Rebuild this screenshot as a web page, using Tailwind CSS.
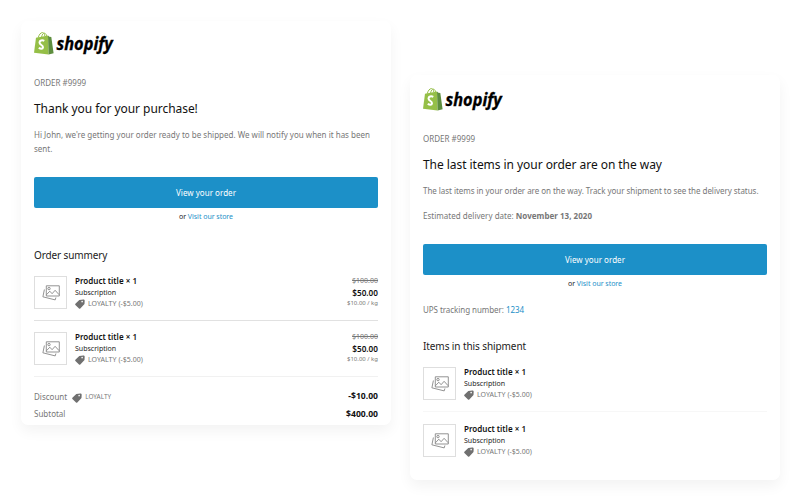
<!DOCTYPE html>
<html lang="en">
<head>
<meta charset="utf-8">
<title>Order emails</title>
<script src="https://cdn.jsdelivr.net/npm/@tailwindcss/browser@4"></script>
</head>
<body class="h-[500px] w-[800px] overflow-hidden bg-white font-['Noto_Sans',sans-serif] text-[8px] text-[#777]">
<svg class="hidden">
  <symbol id="logo" viewBox="0 0 80 24">
    <path d="M4.200 6.800C5 3.600 6.700 1.500 8.500 1.600c1.300 0 2 1.200 2.300 3.400M7.600 6.100C8 3.600 9.200 1.800 10.600 2.200c1.200.3 1.900 1.600 2 3" fill="none" stroke="#95bf47" stroke-width="1"/>
    <path d="M2 6.800 14 4.400l.6 19.200L0 21.700z" fill="#95bf47"/>
    <path d="m14 4.400 1.400 1.300 1.900.3 2.300 16.300-5 1.300z" fill="#5e8e3e"/>
    <path d="M10.300 9.800C8.100 8.700 5.500 9.400 5.500 11.500c0 2.400 3.700 2.700 3.500 4.900-.2 1.900-2.600 1.600-4.200.3" fill="none" stroke="#fff" stroke-width="2"/>
    <text x="22.500" y="18.900" font-family="Open Sans" font-style="italic" font-weight="700" font-size="17.500" textLength="56.300" lengthAdjust="spacingAndGlyphs" fill="#000" stroke="#000" stroke-width=".3">shopify</text>
  </symbol>
  <symbol id="photo" viewBox="0 0 18 16">
    <g fill="none" stroke="#808080" stroke-width=".85">
      <path d="M4.300.8h13v10.200h-13zM4.500 9.700l3.300-3.500 2.300 2.500 3-3.400 4 4.400"/>
      <circle cx="7" cy="3.600" r="1.200"/>
      <path d="M2.400 4.500.900 11.800l12.300 3.100.7-2.400"/>
    </g>
  </symbol>
  <symbol id="tag" viewBox="0 0 10 10">
    <path fill-rule="evenodd" d="M4.300.9 8.300.4c.9 0 1.300.4 1.400 1.200L9.500 4.900 5.300 9.500c-.4.400-.9.400-1.300 0L.4 6c-.4-.4-.4-.9 0-1.300zM7.100 1.800a.8.800 0 1 0 .1 1.600.8.800 0 0 0-.1-1.600z" fill="#707070"/>
  </symbol>
</svg>
<main class="flex items-start gap-[19px] pl-[21px] pt-[21px]">
  <section class="h-[404px] w-[370px] rounded-[7px] bg-white px-[13px] pt-[10px] shadow-[0_6px_14px_rgba(0,0,0,0.05)]">
    <svg class="h-[24px] w-[80px]"><use href="#logo"/></svg>
    <p class="mt-[22px] h-3 leading-3">ORDER #9999</p>
    <h1 class="mt-[11px] h-[18px] text-[12px] leading-[18px] tracking-[-0.05px] text-[#111]">Thank you for your purchase!</h1>
    <p class="mt-[10px] h-[28px] leading-[14px] tracking-[0.006px]">Hi John, we're getting your order ready to be shipped. We will notify you when it has been<br>sent.</p>
    <a class="mt-[21px] flex h-[31px] items-center justify-center rounded-[2px] bg-[#1c90c8] tracking-[0.03px] text-white">View your order</a>
    <p class="mt-[3px] h-3 text-center text-[7px] leading-3 tracking-[-0.03px] text-[#222]">or <a class="text-[#1c90c8]">Visit our store</a></p>
    <h2 class="mt-[24px] h-4 text-[10px] leading-4 tracking-[-0.12px] text-[#222]">Order summery</h2>
    <div class="mt-[12px] flex h-[46px] border-b border-[#e1e1e1] pt-px text-[7px]">
      <div class="flex size-[33px] items-center justify-center border border-[#dedede]"><svg class="h-4 w-[18px]"><use href="#photo"/></svg></div>
      <div class="-mt-px ml-2 flex flex-1 flex-col leading-[11.500px]">
        <p class="text-[8px] font-semibold tracking-[0.02px] text-[#111]">Product title × 1</p>
        <p class="text-[#222]">Subscription</p>
        <p class="flex items-center gap-[3px] tracking-[0.03px]"><svg class="mt-px size-[10px]"><use href="#tag"/></svg>LOYALTY (-$5.00)</p>
      </div>
      <div class="-mt-px text-right leading-[11.500px]">
        <p class="line-through">$100.00</p>
        <p class="text-[8.200px] font-semibold text-[#111]">$50.00</p>
        <p class="text-[6px]">$10.00 / kg</p>
      </div>
    </div>
    <div class="flex h-[56px] border-b border-[#f1f1f1] pt-[11px] text-[7px]">
      <div class="flex size-[33px] items-center justify-center border border-[#dedede]"><svg class="h-4 w-[18px]"><use href="#photo"/></svg></div>
      <div class="-mt-px ml-2 flex flex-1 flex-col leading-[11.500px]">
        <p class="text-[8px] font-semibold tracking-[0.02px] text-[#111]">Product title × 1</p>
        <p class="text-[#222]">Subscription</p>
        <p class="flex items-center gap-[3px] tracking-[0.03px]"><svg class="mt-px size-[10px]"><use href="#tag"/></svg>LOYALTY (-$5.00)</p>
      </div>
      <div class="-mt-px text-right leading-[11.500px]">
        <p class="line-through">$100.00</p>
        <p class="text-[8.200px] font-semibold text-[#111]">$50.00</p>
        <p class="text-[6px]">$10.00 / kg</p>
      </div>
    </div>
    <div class="mt-[11px] flex h-[17px] items-center">
      <span>Discount</span>
      <svg class="ml-[5px] mt-[2px] size-[10px]"><use href="#tag"/></svg>
      <span class="ml-[3px] text-[6.400px]">LOYALTY</span>
      <b class="ml-auto text-[8.600px] text-[#111]">-$10.00</b>
    </div>
    <div class="flex h-[18px] items-center justify-between"><span>Subtotal</span><b class="text-[8.600px] text-[#111]">$400.00</b></div>
  </section>

  <section class="mt-[54px] h-[405px] w-[370px] rounded-[7px] bg-white px-[13px] pt-[12px] shadow-[0_6px_14px_rgba(0,0,0,0.05)]">
    <svg class="h-[24px] w-[80px]"><use href="#logo"/></svg>
    <p class="mt-[22px] h-3 leading-3">ORDER #9999</p>
    <h1 class="mt-[11px] h-[18px] text-[12px] leading-[18px] tracking-[-0.05px] text-[#111]">The last items in your order are on the way</h1>
    <p class="mt-[10px] h-[14px] leading-[14px] tracking-[-0.040px]">The last items in your order are on the way. Track your shipment to see the delivery status.</p>
    <p class="mt-[11px] h-[14px] leading-[14px] tracking-[0.023px]">Estimated delivery date: <b>November 13, 2020</b></p>
    <a class="mt-[21px] flex h-[31px] items-center justify-center rounded-[2px] bg-[#1c90c8] tracking-[0.03px] text-white">View your order</a>
    <p class="mt-[3px] h-3 text-center text-[7px] leading-3 tracking-[-0.03px] text-[#222]">or <a class="text-[#1c90c8]">Visit our store</a></p>
    <p class="mt-[13px] h-[14px] leading-[14px] tracking-[-0.058px]">UPS tracking number: <a class="text-[#1c90c8]">1234</a></p>
    <h2 class="mt-[21px] h-4 text-[10px] leading-4 tracking-[-0.09px] text-[#222]">Items in this shipment</h2>
    <div class="mt-[13px] flex h-[45px] border-b border-[#f7f7f7] text-[7px]">
      <div class="flex size-[33px] items-center justify-center border border-[#dedede]"><svg class="h-4 w-[18px]"><use href="#photo"/></svg></div>
      <div class="-mt-px ml-2 flex flex-1 flex-col leading-[11.500px]">
        <p class="text-[8px] font-semibold tracking-[0.02px] text-[#111]">Product title × 1</p>
        <p class="text-[#222]">Subscription</p>
        <p class="flex items-center gap-[3px] tracking-[0.03px]"><svg class="mt-px size-[10px]"><use href="#tag"/></svg>LOYALTY (-$5.00)</p>
      </div>
    </div>
    <div class="flex pt-[12px] text-[7px]">
      <div class="flex size-[33px] items-center justify-center border border-[#dedede]"><svg class="h-4 w-[18px]"><use href="#photo"/></svg></div>
      <div class="-mt-px ml-2 flex flex-1 flex-col leading-[11.500px]">
        <p class="text-[8px] font-semibold tracking-[0.02px] text-[#111]">Product title × 1</p>
        <p class="text-[#222]">Subscription</p>
        <p class="flex items-center gap-[3px] tracking-[0.03px]"><svg class="mt-px size-[10px]"><use href="#tag"/></svg>LOYALTY (-$5.00)</p>
      </div>
    </div>
  </section>
</main>
</body>
</html>
